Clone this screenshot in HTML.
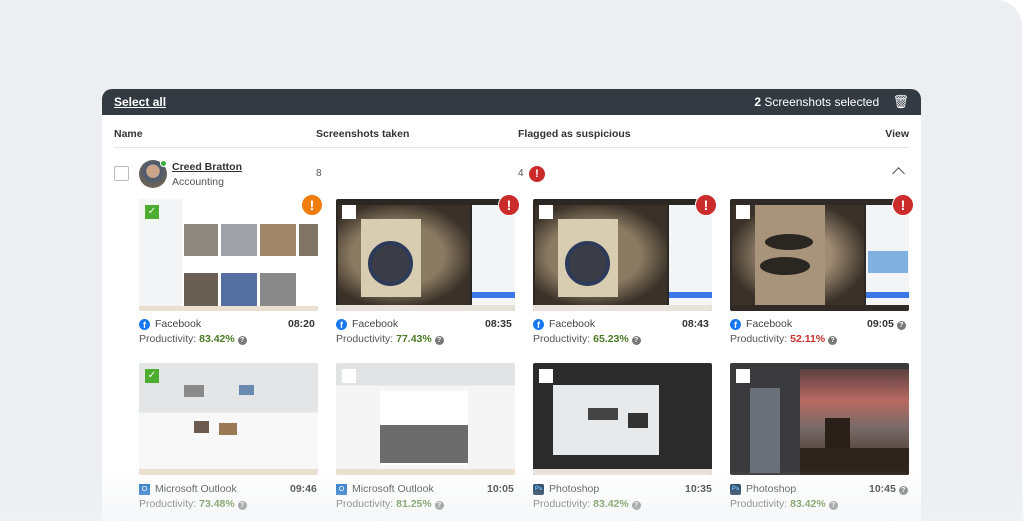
<!DOCTYPE html>
<html><head><meta charset="utf-8"><style>
*{box-sizing:border-box;margin:0;padding:0}
html,body{width:1024px;height:521px;overflow:hidden}
body{background:#fff;font-family:"Liberation Sans",sans-serif;position:relative}
.bg{position:absolute;left:-30px;top:0;width:1052px;height:521px;background:#eceef2;border-radius:0 26px 0 0}
.card{position:absolute;left:102px;top:89px;width:819px;height:432px;background:#fff;border-radius:10px 10px 0 0;overflow:hidden}
.hdr{height:26px;background:#343a42;color:#fff;font-size:12px;display:flex;align-items:center;justify-content:space-between;padding:0 12px}
.hdr u{font-weight:bold}
.th{position:absolute;top:39px;font-size:10.5px;font-weight:bold;color:#333}
.line{position:absolute;left:12px;right:12px;top:58px;height:1px;background:#e3e5e8}
.cb{position:absolute;width:15px;height:15px;border:1px solid #b8bcc2;border-radius:2px;background:#fff}
.av{position:absolute;left:37px;top:71px;width:28px;height:28px;border-radius:50%;background:radial-gradient(circle at 50% 40%,#c9a488 0 30%,#4a5a72 32%,#6c6355 70%)}
.dot{position:absolute;left:58px;top:71px;width:7px;height:7px;border-radius:50%;background:#3bb13b;border:1px solid #fff}
.alert{position:absolute;width:22px;height:22px;border-radius:50%;background:#cc2b2b;color:#fff;font-weight:bold;font-size:14px;text-align:center;line-height:20px;border:1.5px solid #fff}
.sm{width:16px;height:16px;font-size:11px;line-height:16px;border:none}
.thumb{position:absolute;width:179px;height:112px;overflow:hidden;border-radius:2px}
.tcb{position:absolute;left:6px;top:6px;width:14px;height:14px;background:#fff}
.chk{background:#4cad2e;color:#fff;font-size:10px;text-align:center;line-height:14px}
.app{position:absolute;font-size:10.5px;color:#444;display:flex;align-items:center;gap:5px}
.time{position:absolute;font-size:10.5px;font-weight:bold;color:#333}
.prod{position:absolute;font-size:10.5px;color:#555}
.prod b{color:#4a7a24}
.prod b.r{color:#c9302c}
.q{display:inline-block;width:9px;height:9px;border-radius:50%;background:#777;color:#fff;font-size:7px;text-align:center;line-height:9px;font-weight:bold;vertical-align:0}
.fb{width:11px;height:11px;border-radius:50%;background:#1877f2;color:#fff;font-size:9px;font-weight:bold;text-align:center;line-height:12px}
.ol{width:11px;height:11px;background:#1a6fc4;color:#fff;font-size:7px;text-align:center;line-height:11px}
.ps{width:11px;height:11px;background:#0a2a4a;color:#4cb0ff;font-size:6px;font-weight:bold;text-align:center;line-height:11px;border-radius:2px}
.fade{position:absolute;left:0;top:470px;width:1024px;height:51px;background:linear-gradient(rgba(240,241,243,0),rgba(240,241,243,.6))}
</style></head><body>
<div class="bg"></div>
<div class="card">
<div class="hdr"><u>Select all</u><span><b>2</b> Screenshots selected &nbsp;&nbsp;&nbsp;<span style="font-size:13px">🗑</span></span></div>
<div class="th" style="left:12px">Name</div>
<div class="th" style="left:214px">Screenshots taken</div>
<div class="th" style="left:416px">Flagged as suspicious</div>
<div class="th" style="right:12px">View</div>
<div class="line"></div>
<div class="cb" style="left:12px;top:77px"></div>
<div class="av"></div><div class="dot"></div>
<div style="position:absolute;left:70px;top:72px;font-size:10.5px;font-weight:bold;color:#333;text-decoration:underline">Creed Bratton</div>
<div style="position:absolute;left:70px;top:87px;font-size:10.5px;color:#555">Accounting</div>
<div style="position:absolute;left:214px;top:79px;font-size:10px;color:#555">8</div>
<div style="position:absolute;left:416px;top:79px;font-size:10px;color:#555">4</div>
<div class="alert sm" style="left:427px;top:77px">!</div>
<div style="position:absolute;left:792px;top:80px;width:9px;height:9px;border-left:1.5px solid #555;border-top:1.5px solid #555;transform:rotate(45deg)"></div>

<div class="thumb" style="left:37px;top:110px;background:linear-gradient(90deg,#f4f5f7 0 24%,#fff 24%);">
 <div style="position:absolute;left:45px;top:25px;width:34px;height:32px;background:#8f8a80"></div>
 <div style="position:absolute;left:82px;top:25px;width:36px;height:32px;background:#9ea2a6"></div>
 <div style="position:absolute;left:121px;top:25px;width:36px;height:32px;background:#a0876a"></div>
 <div style="position:absolute;left:160px;top:25px;width:19px;height:32px;background:#7f7466"></div>
 <div style="position:absolute;left:45px;top:74px;width:34px;height:33px;background:#6a5f55"></div>
 <div style="position:absolute;left:82px;top:74px;width:36px;height:33px;background:#5570a0"></div>
 <div style="position:absolute;left:121px;top:74px;width:36px;height:33px;background:#8a8a8a"></div>
 <div style="position:absolute;left:0;bottom:0;width:179px;height:5px;background:#eadfd0"></div>
 <div class="tcb chk">✓</div></div>
<div class="alert" style="left:199px;top:105px;background:#f07d10">!</div>
<div class="thumb" style="left:234px;top:110px;background:#2b2722">
 <div style="position:absolute;left:2px;top:6px;width:132px;height:100px;background:radial-gradient(ellipse at 45% 50%,#8b7a62 0 45%,#3a3128 75%)"></div>
 <div style="position:absolute;left:25px;top:20px;width:60px;height:78px;background:#d8cdb0"></div>
 <div style="position:absolute;left:32px;top:42px;width:45px;height:45px;border-radius:50%;background:#3a3d45;border:4px solid #2d3a5a"></div>
 <div style="position:absolute;left:136px;top:6px;width:43px;height:100px;background:#f3f4f6"></div>
 <div style="position:absolute;left:136px;top:93px;width:43px;height:6px;background:#3a78e8"></div>
 <div style="position:absolute;left:0;bottom:0;width:179px;height:6px;background:#e7e2da"></div>
 <div class="tcb"></div></div>
<div class="alert" style="left:396px;top:105px">!</div>
<div class="thumb" style="left:431px;top:110px;background:#2b2722">
 <div style="position:absolute;left:2px;top:6px;width:132px;height:100px;background:radial-gradient(ellipse at 45% 50%,#8b7a62 0 45%,#3a3128 75%)"></div>
 <div style="position:absolute;left:25px;top:20px;width:60px;height:78px;background:#d8cdb0"></div>
 <div style="position:absolute;left:32px;top:42px;width:45px;height:45px;border-radius:50%;background:#3a3d45;border:4px solid #2d3a5a"></div>
 <div style="position:absolute;left:136px;top:6px;width:43px;height:100px;background:#f3f4f6"></div>
 <div style="position:absolute;left:136px;top:93px;width:43px;height:6px;background:#3a78e8"></div>
 <div style="position:absolute;left:0;bottom:0;width:179px;height:6px;background:#e7e2da"></div>
 <div class="tcb"></div></div>
<div class="alert" style="left:593px;top:105px">!</div>
<div class="thumb" style="left:628px;top:110px;background:#2f2a25">
 <div style="position:absolute;left:2px;top:6px;width:132px;height:100px;background:radial-gradient(ellipse at 50% 50%,#a08c74 0 35%,#3a3128 75%)"></div>
 <div style="position:absolute;left:25px;top:6px;width:70px;height:100px;background:#a8947a"></div>
 <div style="position:absolute;left:35px;top:35px;width:48px;height:16px;border-radius:50%;background:#2a2622"></div>
 <div style="position:absolute;left:30px;top:58px;width:50px;height:18px;border-radius:50%;background:#2a2622"></div>
 <div style="position:absolute;left:136px;top:6px;width:43px;height:100px;background:#f3f4f6"></div>
 <div style="position:absolute;left:138px;top:52px;width:40px;height:22px;background:#7fb0e0"></div>
 <div style="position:absolute;left:136px;top:93px;width:43px;height:6px;background:#3a78e8"></div>
 <div class="tcb"></div></div>
<div class="alert" style="left:790px;top:105px">!</div>

<div class="app" style="left:37px;top:229px"><span class="fb">f</span>Facebook</div><div class="time" style="left:186px;top:229px">08:20</div>
<div class="prod" style="left:37px;top:244px">Productivity: <b>83.42%</b> <span class="q">?</span></div>
<div class="app" style="left:234px;top:229px"><span class="fb">f</span>Facebook</div><div class="time" style="left:383px;top:229px">08:35</div>
<div class="prod" style="left:234px;top:244px">Productivity: <b>77.43%</b> <span class="q">?</span></div>
<div class="app" style="left:431px;top:229px"><span class="fb">f</span>Facebook</div><div class="time" style="left:580px;top:229px">08:43</div>
<div class="prod" style="left:431px;top:244px">Productivity: <b>65.23%</b> <span class="q">?</span></div>
<div class="app" style="left:628px;top:229px"><span class="fb">f</span>Facebook</div><div class="time" style="left:765px;top:229px">09:05 <span class="q">?</span></div>
<div class="prod" style="left:628px;top:244px">Productivity: <b class="r">52.11%</b> <span class="q">?</span></div>

<div class="thumb" style="left:37px;top:274px;background:linear-gradient(#e4e5e7 0 44%,#f8f8f9 44%)">
 <div style="position:absolute;left:45px;top:22px;width:20px;height:12px;background:#8a8a8a"></div>
 <div style="position:absolute;left:100px;top:22px;width:15px;height:10px;background:#6a8ab0"></div>
 <div style="position:absolute;left:55px;top:58px;width:15px;height:12px;background:#6a5a50"></div>
 <div style="position:absolute;left:80px;top:60px;width:18px;height:12px;background:#9a7a55"></div>
 <div style="position:absolute;left:0;bottom:0;width:179px;height:6px;background:#eadfd0"></div>
 <div class="tcb chk">✓</div></div>
<div class="thumb" style="left:234px;top:274px;background:linear-gradient(#e2e3e5 0 20%,#f5f5f6 20%)">
 <div style="position:absolute;left:44px;top:28px;width:88px;height:74px;background:#fff"></div>
 <div style="position:absolute;left:44px;top:62px;width:88px;height:38px;background:#6c6c6c"></div>
 <div style="position:absolute;left:0;bottom:0;width:179px;height:6px;background:#eadfd0"></div>
 <div class="tcb"></div></div>
<div class="thumb" style="left:431px;top:274px;background:#2b2b2b">
 <div style="position:absolute;left:20px;top:22px;width:106px;height:70px;background:#e8e9eb"></div>
 <div style="position:absolute;left:55px;top:45px;width:30px;height:12px;background:#444"></div>
 <div style="position:absolute;left:95px;top:50px;width:20px;height:15px;background:#333"></div>
 <div style="position:absolute;left:0;bottom:0;width:179px;height:6px;background:#e7e2da"></div>
 <div class="tcb"></div></div>
<div class="thumb" style="left:628px;top:274px;background:#3a3a3c">
 <div style="position:absolute;left:70px;top:6px;width:109px;height:106px;background:linear-gradient(#5c4040,#b86a62 30%,#7a6a68 55%,#3a2a20)"></div>
 <div style="position:absolute;left:95px;top:55px;width:25px;height:57px;background:#2a2018"></div>
 <div style="position:absolute;left:70px;top:85px;width:109px;height:27px;background:#2e241c"></div>
 <div style="position:absolute;left:20px;top:25px;width:30px;height:85px;background:#6a7078"></div>
 <div class="tcb"></div></div>

<div class="app" style="left:37px;top:394px"><span class="ol">O</span>Microsoft Outlook</div><div class="time" style="left:188px;top:394px">09:46</div>
<div class="prod" style="left:37px;top:409px">Productivity: <b>73.48%</b> <span class="q">?</span></div>
<div class="app" style="left:234px;top:394px"><span class="ol">O</span>Microsoft Outlook</div><div class="time" style="left:385px;top:394px">10:05</div>
<div class="prod" style="left:234px;top:409px">Productivity: <b>81.25%</b> <span class="q">?</span></div>
<div class="app" style="left:431px;top:394px"><span class="ps">Ps</span>Photoshop</div><div class="time" style="left:583px;top:394px">10:35</div>
<div class="prod" style="left:431px;top:409px">Productivity: <b>83.42%</b> <span class="q">?</span></div>
<div class="app" style="left:628px;top:394px"><span class="ps">Ps</span>Photoshop</div><div class="time" style="left:767px;top:394px">10:45 <span class="q">?</span></div>
<div class="prod" style="left:628px;top:409px">Productivity: <b>83.42%</b> <span class="q">?</span></div>
</div>
<div class="fade"></div>
</body></html>
